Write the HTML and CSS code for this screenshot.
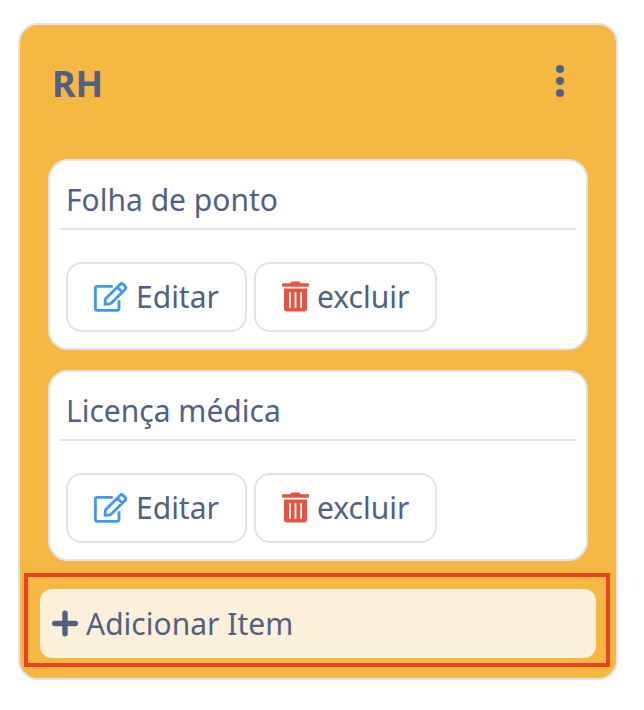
FILE: index.html
```
<!DOCTYPE html>
<html lang="pt-BR">
<head>
<meta charset="utf-8">
<title>RH</title>
<link rel="stylesheet" href="styles.css">
</head>
<body>
<svg class="sprite" aria-hidden="true">
  <symbol id="edit" viewBox="0 0 35 32">
    <path d="M19.8 5.4H4.1Q2.4 5.4 2.4 7.1V27.6Q2.4 29.3 4.1 29.3H24.3Q26 29.3 26 27.6V19.2" fill="none" stroke="#4299ec" stroke-width="2.8"/>
    <path d="M12.8 17.6 27 3.4Q28.6 1.8 30.2 3.4L32 5.2Q33.6 6.8 32 8.4L18.6 21.8Q17.6 22.8 16.2 23L12 23.4 12.3 19.2Q12.4 18 12.8 17.6ZM24.2 6.2 29.4 11.2" fill="none" stroke="#4299ec" stroke-width="2.8" stroke-linejoin="round"/>
  </symbol>
  <symbol id="trash" viewBox="0 0 27 31">
    <path fill="#e35540" fill-rule="evenodd" d="M1 2.2H8.2L9.4.8Q9.8.4 10.4.4H16.6Q17.2.4 17.6.8L18.8 2.2H26Q27 2.2 27 3.1V4.8Q27 5.7 26 5.7H1Q0 5.7 0 4.8V3.1Q0 2.2 1 2.2ZM2 7.5H25V27.5Q25 30.4 22.3 30.4H4.7Q2 30.4 2 27.5ZM7 11.3V26.7H8.8V11.3ZM12.6 11.3V26.7H14.4V11.3ZM18.2 11.3V26.7H20V11.3Z"/>
  </symbol>
</svg>
<section class="column">
  <header class="column-header">
    <h1 class="column-title">RH</h1>
    <svg class="menu" viewBox="0 0 8 32"><circle cx="4" cy="4" r="4"/><circle cx="4" cy="16" r="4"/><circle cx="4" cy="28" r="4"/></svg>
  </header>
  <div class="cards">
    <article class="card">
      <h2 class="card-title">Folha de ponto</h2>
      <div class="actions">
        <button class="action edit"><svg class="icon-edit"><use href="#edit"/></svg>Editar</button>
        <button class="action delete"><svg class="icon-trash"><use href="#trash"/></svg>excluir</button>
      </div>
    </article>
    <article class="card">
      <h2 class="card-title">Licença médica</h2>
      <div class="actions">
        <button class="action edit"><svg class="icon-edit"><use href="#edit"/></svg>Editar</button>
        <button class="action delete"><svg class="icon-trash"><use href="#trash"/></svg>excluir</button>
      </div>
    </article>
  </div>
  <div class="highlight">
    <button class="add"><svg class="icon-plus" viewBox="0 0 26 27"><path d="M2.7 13.5H23.3M13 3.2V23.8"/></svg>Adicionar Item</button>
  </div>
</section>
</body>
</html>
```

FILE: styles.css
```
* { box-sizing: border-box; }
body {
  margin: 0;
  padding: 23px 26px 0 18px;
  background: #fff;
  color: #526183;
  font-family: "Noto Sans", sans-serif;
  font-size: 30px;
}
.sprite { display: none; }
.column {
  width: 600px;
  height: 657px;
  background: #f5b842;
  border: 2px solid #dfe3ed;
  border-radius: 20px;
}
.column-header {
  display: flex;
  justify-content: space-between;
  height: 134px;
  padding: 40px 52px 0 32px;
}
.column-title {
  margin: -6px 0 0;
  font-size: 36px;
  line-height: 49px;
  font-weight: 700;
}
.menu { width: 8px; height: 32px; fill: #526183; }
.cards {
  display: flex;
  flex-direction: column;
  gap: 20px;
  padding: 0 28px;
}
.card {
  height: 191px;
  padding: 0 10px;
  background: #fff;
  border: 2px solid #dfe3ed;
  border-radius: 20px;
}
.card-title {
  height: 69px;
  margin: 0;
  padding: 18px 6px 0;
  border-bottom: 2px solid #dfe3ed;
  font-size: 30px;
  line-height: 41px;
  font-weight: 400;
}
.actions { display: flex; gap: 7px; padding: 32px 6px 0; }
.action {
  display: flex;
  align-items: center;
  height: 70px;
  padding: 0 0 2px 26px;
  background: #fff;
  border: 2px solid #dfe3ed;
  border-radius: 16px;
  color: inherit;
  font: inherit;
}
.edit { width: 181px; }
.delete { width: 183px; }
.icon-edit { width: 35px; height: 32px; margin: 2px 8px 0 -1px; }
.icon-trash { width: 27px; height: 31px; margin: 1px 8px 0 0; }
.highlight {
  width: 586px;
  height: 94px;
  margin: 12px 0 0 4px;
  padding: 12px 10px 0 12px;
  border: 4px solid #ee4023;
}
.add {
  display: flex;
  align-items: center;
  gap: 8px;
  width: 100%;
  height: 69px;
  padding: 0 12px;
  background: #fdf0da;
  border: 0;
  border-radius: 12px;
  color: inherit;
  font: inherit;
}
.icon-plus {
  width: 26px;
  height: 27px;
  fill: none;
  stroke: #526183;
  stroke-width: 5.4;
  stroke-linecap: round;
}
```
